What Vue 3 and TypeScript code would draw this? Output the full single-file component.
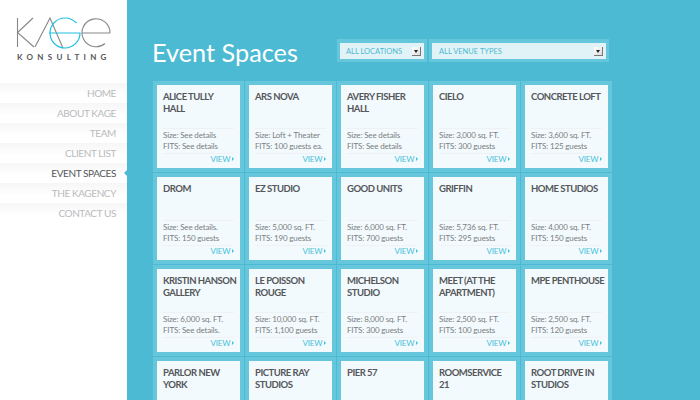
<script setup lang="ts">
interface Space { name: string; size: string; fits: string }
const nav = ['HOME', 'ABOUT KAGE', 'TEAM', 'CLIENT LIST', 'EVENT SPACES', 'THE KAGENCY', 'CONTACT US']
const spaces: Space[] = [
  { name: 'ALICE TULLY\nHALL', size: 'Size: See details', fits: 'FITS: See details' },
  { name: 'ARS NOVA', size: 'Size: Loft + Theater', fits: 'FITS: 100 guests ea.' },
  { name: 'AVERY FISHER\nHALL', size: 'Size: See details', fits: 'FITS: See details' },
  { name: 'CIELO', size: 'Size: 3,000 sq. FT.', fits: 'FITS: 300 guests' },
  { name: 'CONCRETE LOFT', size: 'Size: 3,600 sq. FT.', fits: 'FITS: 125 guests' },
  { name: 'DROM', size: 'Size: See details.', fits: 'FITS: 150 guests' },
  { name: 'EZ STUDIO', size: 'Size: 5,000 sq. FT.', fits: 'FITS: 190 guests' },
  { name: 'GOOD UNITS', size: 'Size: 6,000 sq. FT.', fits: 'FITS: 700 guests' },
  { name: 'GRIFFIN', size: 'Size: 5,736 sq. FT.', fits: 'FITS: 295 guests' },
  { name: 'HOME STUDIOS', size: 'Size: 4,000 sq. FT.', fits: 'FITS: 150 guests' },
  { name: 'KRISTIN HANSON\nGALLERY', size: 'Size: 6,000 sq. FT.', fits: 'FITS: See details.' },
  { name: 'LE POISSON\nROUGE', size: 'Size: 10,000 sq. FT.', fits: 'FITS: 1,100 guests' },
  { name: 'MICHELSON\nSTUDIO', size: 'Size: 8,000 sq. FT.', fits: 'FITS: 300 guests' },
  { name: 'MEET (AT THE\nAPARTMENT)', size: 'Size: 2,500 sq. FT.', fits: 'FITS: 100 guests' },
  { name: 'MPE PENTHOUSE', size: 'Size: 2,500 sq. FT.', fits: 'FITS: 120 guests' },
  { name: 'PARLOR NEW\nYORK', size: '', fits: '' },
  { name: 'PICTURE RAY\nSTUDIOS', size: '', fits: '' },
  { name: 'PIER 57', size: '', fits: '' },
  { name: 'ROOMSERVICE\n21', size: '', fits: '' },
  { name: 'ROOT DRIVE IN\nSTUDIOS', size: '', fits: '' },
]
</script>

<template>
  <div class="page">
    <aside class="side">
      <div class="logo">
        <svg width="127" height="42" viewBox="0 0 127 42" class="mark">
          <g fill="none" stroke="#85878a" stroke-width="1.1">
            <path d="M17.500 8V37M33 8L17.500 22.500L34 37" />
            <path d="M35 37L50 8L62.500 37" />
            <path d="M110 23H82M110 23A14 14 0 1 0 105 33.500" />
          </g>
          <g fill="none" stroke="#22bfe2" stroke-width="1.200">
            <path d="M49 23H80C80 31.500 73 38 65 38C56.500 38 50 31 50 23C50 15 56.500 8 65 8C69.500 8 73.500 10 76.500 13" />
          </g>
        </svg>
        <div class="kons">KONSULTING</div>
      </div>
      <nav class="nav">
        <a v-for="n in nav" :key="n" class="nav-item" :class="{ active: n === 'EVENT SPACES' }">{{ n }}</a>
      </nav>
    </aside>
    <main class="main">
      <header class="head">
        <h1 class="title">Event Spaces</h1>
        <div class="filter short"><span>ALL LOCATIONS</span><i class="arrow"></i></div>
        <div class="filter long"><span>ALL VENUE TYPES</span><i class="arrow"></i></div>
      </header>
      <section class="grid">
        <article v-for="s in spaces" :key="s.name" class="card">
          <h2 class="name">{{ s.name }}</h2>
          <template v-if="s.size">
            <div class="info">
              <p>{{ s.size }}</p>
              <p>{{ s.fits }}</p>
            </div>
            <a class="view">VIEW <b class="tri"></b></a>
          </template>
        </article>
      </section>
    </main>
  </div>
</template>

<style>
html, body { margin: 0; overflow: hidden; }
</style>

<style scoped>
.page { width: 700px; height: 400px; display: flex; overflow: hidden; font-family: Lato, "Liberation Sans", sans-serif; background: #4cbad3; }
.side { width: 127px; flex: none; background: #fff; }
.logo { height: 83px; padding-top: 10px; box-sizing: border-box; }
.mark { display: block; }
.kons { font-size: 8px; font-weight: 700; letter-spacing: 4.300px; color: #55575a; margin: 0 0 0 17px; line-height: 10px; white-space: nowrap; }
.nav { display: flex; flex-direction: column; }
.nav-item { height: 20px; line-height: 20px; text-align: right; padding-right: 11px; font-size: 10px; letter-spacing: -0.400px; color: #b9bbbc; background: linear-gradient(180deg, #f6f6f6 0, #fff 13px); position: relative; }
.nav-item.active { color: #55575a; }
.nav-item.active::after { content: ""; position: absolute; right: 0; top: 7px; border: 3px solid transparent; border-right: 3px solid #4cbad3; border-left: 0; }
.main { flex: 1; padding: 0 0 0 26px; min-width: 0; }
.head { height: 81px; display: flex; align-items: flex-start; box-sizing: border-box; }
.title { margin: 36px 0 0 -1px; width: 185px; flex: none; font-size: 25.300px; font-weight: 400; color: #fff; line-height: 32px; white-space: nowrap; }
.filter { margin-top: 39px; height: 23px; box-sizing: border-box; border: solid #66c6dc; border-width: 4px 3px 3px; background: #e2f3f7; color: #4cbad3; font-size: 7.500px; display: flex; align-items: center; justify-content: space-between; padding: 0 3px 0 6px; }
.short { width: 90px; margin-right: 2px; }
.long { width: 180px; padding-left: 7px; }
.arrow { width: 9px; height: 9px; background: linear-gradient(135deg, #fff, #ddd); border-right: 1px solid #777; border-bottom: 1px solid #777; box-sizing: border-box; position: relative; }
.arrow::after { content: ""; position: absolute; left: 2px; top: 3px; border: 2px solid transparent; border-top: 3px solid #222; border-bottom: 0; }
.grid { display: grid; grid-template-columns: repeat(5, 91px); grid-template-rows: repeat(3, 91px) 27px; gap: 1px; overflow: hidden; height: 319px; }
.card { box-sizing: border-box; border: 4px solid #66c6dc; background: #f2fafd; display: flex; flex-direction: column; padding: 6px 6px 0; position: relative; min-height: 91px; }
.name { margin: 0; height: 37px; flex: none; font-size: 9.500px; line-height: 12px; letter-spacing: -0.500px; font-weight: 700; color: #55575a; white-space: pre; }
.info { box-sizing: border-box; height: 26px; border-top: 1px solid #eef2f4; border-bottom: 1px solid #eef2f4; padding: 1px 0 0; font-size: 8px; letter-spacing: -0.150px; line-height: 10.500px; color: #7b7e80; flex: none; }
.info p { margin: 0; white-space: nowrap; }
.view { text-align: right; font-size: 8px; letter-spacing: -0.200px; line-height: 11px; color: #45c0da; }
.tri { display: inline-block; vertical-align: 1px; border: 2px solid transparent; border-left: 2px solid #45c0da; border-right: 0; }
</style>
